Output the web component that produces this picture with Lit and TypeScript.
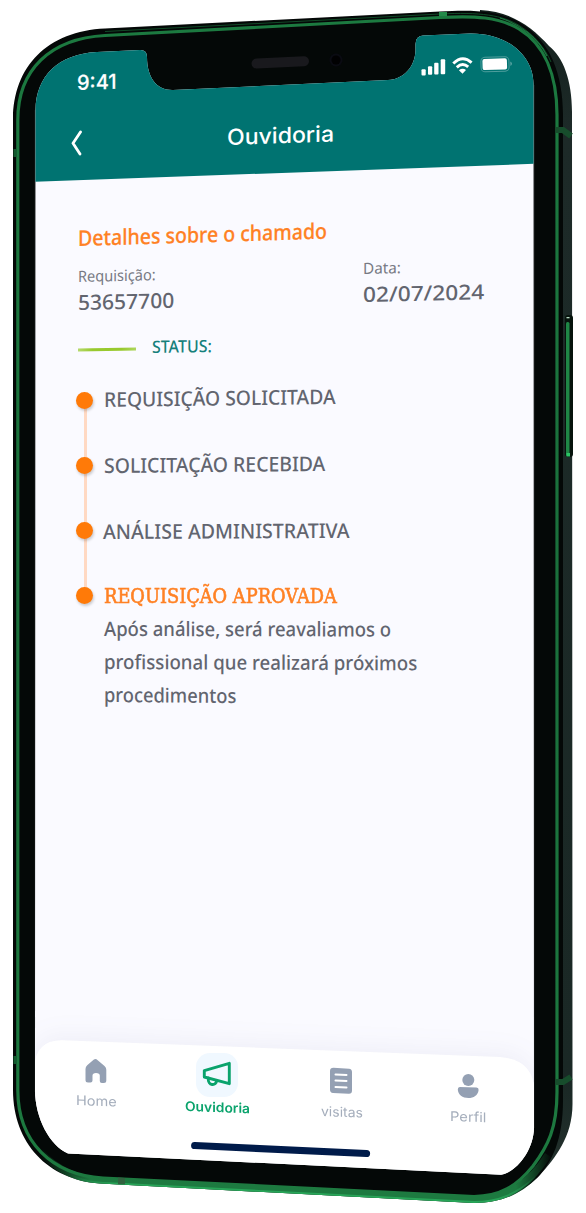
import { LitElement, html, css, svg } from "lit";
import { customElement, property, query } from "lit/decorators.js";

/** One line of text, stretched to a set width and slanted with the screen's perspective. */
@customElement("slant-text")
class SlantText extends LitElement {
  @property({ type: Number }) span = 100;
  @property({ type: Number }) slope = 0;
  @query(".t") private inner!: HTMLElement;

  static styles = css`
    :host { display: block; white-space: nowrap; }
    .t { display: inline-block; transform-origin: 0 50%; vertical-align: top; }
  `;

  firstUpdated() {
    const w = this.inner.offsetWidth;
    if (w) {
      this.style.width = `${this.span}px`;
      this.inner.style.transform = `skewY(${this.slope}deg) scaleX(${this.span / w})`;
    }
  }

  render() {
    return html`<span class="t"><slot></slot></span>`;
  }
}

const frame = svg`
  <defs>
    <linearGradient id="side" x1="0" y1="0" x2="0" y2="1">
      <stop offset="0" stop-color="#13201c"/><stop offset=".1" stop-color="#1d2a28"/>
      <stop offset=".9" stop-color="#1a2825"/><stop offset="1" stop-color="#26332f"/>
    </linearGradient>
    <linearGradient id="rim" x1="0" y1="0" x2="0" y2="1">
      <stop offset="0" stop-color="#1c7a40"/><stop offset=".5" stop-color="#1a6f3b"/><stop offset="1" stop-color="#1d7a40"/>
    </linearGradient>
    <linearGradient id="band" gradientUnits="userSpaceOnUse" x1="40" y1="0" x2="552" y2="0">
      <stop offset="0" stop-color="#1d7a40" stop-opacity="0"/><stop offset=".1" stop-color="#1d7a40"/>
      <stop offset=".93" stop-color="#1d7a40"/><stop offset="1" stop-color="#1d7a40" stop-opacity="0"/>
    </linearGradient>
    <linearGradient id="lip" gradientUnits="userSpaceOnUse" x1="70" y1="0" x2="540" y2="0">
      <stop offset="0" stop-color="#28a558" stop-opacity="0"/><stop offset=".1" stop-color="#28a558"/>
      <stop offset=".9" stop-color="#28a558"/><stop offset="1" stop-color="#28a558" stop-opacity="0"/>
    </linearGradient>
    <clipPath id="front"><path d="M13 120 C13 66 48 31 105 28.500 L440 11.500 C480 9 503 12 522 24 C550 41 563 74 563 115 L563 1100 C563 1140 552 1162 538 1177 C520 1195 500 1203 474 1203 L100 1183.500 C48 1180 13 1143 13 1090 Z"/></clipPath>
  </defs>
  <path fill="url(#side)" d="M480 10 C510 11 532 27 549 46 C563 57 572 80 572 112 L572.500 1104 C572.500 1137 555 1158 540 1175 C520 1195 500 1200 470 1200 Z"/>
  <g clip-path="url(#front)">
    <path fill="#040807" d="M13 8 H563 V1204 H13 Z"/>
    <path fill="none" stroke="url(#band)" stroke-width="7" d="M40 1152 C60 1173 82 1180 103 1181.500 L474 1200 C510 1200 532 1180 548 1155"/>
    <path fill="none" stroke="url(#lip)" stroke-width="4" d="M70 1176 C84 1182.500 94 1183.500 103 1184 L474 1203 C500 1203 518 1194 536 1178"/>
    <path fill="none" stroke="#155a2f" stroke-width="1" opacity=".8" d="M105 31.500 L440 14 C480 12 503 15 520 26 C534 35 545 48 551 62"/>
  </g>
  <path fill="none" stroke="url(#rim)" stroke-width="3.200" d="M17.800 1090 L17.800 120 C17.800 70 50 38.500 105 35.500 L440 17.500 C475 15.500 499 17 519 29 C545 45 557 76 557 115 L557 1092 C557 1128 548 1146 533 1166 C517 1186 500 1196.500 474 1196.500 L103 1178 C52 1175 17.800 1142 17.800 1090 Z"/>
  <path fill="none" stroke="#2aa75a" stroke-width="1.200" opacity=".7" d="M500 18 C520 24 538 38 547 56"/>
  <path fill="#12592e" d="M13.500 149 h3 v8 h-3z M13.500 1056 h3 v8 h-3z"/>
  <path fill="#238a49" d="M439 12 h8 v4 h-8z"/>
  <path fill="none" stroke="#174d2c" stroke-width="6" d="M555.500 130 L563 130 L571 136 M555.500 1082 L563 1082 L571 1077"/>
  <path fill="#31623f" d="M118 1177.500 l7 .4 v6.400 l-7 -.4z"/>
  <rect x="565" y="315" width="8" height="142" rx="3" fill="#06130c"/>
  <rect x="566" y="322" width="3.500" height="134" rx="1.500" fill="#1f8746"/>
  <rect x="566.500" y="317" width="3" height="1.300" fill="#b9dcc6"/>
  <rect x="566.500" y="453" width="3.500" height="3.500" fill="#2bc365"/>
  <path stroke="#19191d" stroke-width="10" stroke-linecap="round" d="M256.500 63.500 L304 61.200"/>
  <circle cx="336" cy="60" r="6.500" fill="#0a0b12"/><circle cx="336" cy="60" r="4.500" fill="#010102"/>
  <path fill="none" stroke="#5b5f60" stroke-width="1" opacity=".35" d="M35.200 110 L35.200 1092 M534 85 L534 1128"/>
`;

const icons = {
  home: html`<svg width="24" height="26" viewBox="0 0 24 26"><path fill="#94a0b3" d="M9.600 1.800 Q11.600 .2 13.400 1.900 L20.500 8 Q22.300 9.600 22.300 11.800 V22.500 Q22.300 25 19.800 25 H17.800 Q15.800 25 15.800 23 V17.500 Q15.800 15 12 15 Q8.500 15 8.500 17.500 V22.500 Q8.500 24.500 6.500 24.500 H4 Q1.500 24.500 1.500 22 V11 Q1.500 8.700 3.200 7.300 Z"/></svg>`,
  horn: html`<svg width="42" height="44" viewBox="0 0 42 44"><rect width="42" height="44" rx="14" fill="#f0f8ff"/>
    <g fill="none" stroke="#0aa36c" stroke-width="2.900" stroke-linejoin="round" stroke-linecap="round"><path d="M33.300 10.300 V30.700 L8.300 24 V17.600 Z"/><path d="M12.300 25 C11.500 33 20.500 33.500 20.600 27.400"/></g></svg>`,
  list: html`<svg width="24" height="28" viewBox="0 0 24 28"><path fill="#94a0b3" d="M4.500 .8 L20 1.700 Q23 2 23 5 V23.500 Q23 27 19.700 26.800 L4 26 Q1 25.700 1 22.700 V4 Q1 .8 4.500 .8Z"/><path stroke="#fff" stroke-width="2" stroke-linecap="round" d="M6.500 7.500 L17.500 8 M6.500 13.500 L17.500 14 M6.500 20 L17.500 20.500"/></svg>`,
  user: html`<svg width="24" height="26" viewBox="0 0 24 26"><circle cx="12.300" cy="7" r="6" fill="#94a0b3"/><path fill="#94a0b3" d="M3.800 14 L20.500 14.500 Q22.800 14.600 22.600 17 C22 22.500 17.500 25 12.500 25 C6.500 25 2 21.500 1.800 16.500 Q1.700 14 3.800 14Z"/></svg>`,
};

@customElement("app-root")
class AppRoot extends LitElement {
  static styles = css`
    :host { display: block; width: 586px; height: 1213px; background: #fff; overflow: hidden; font-family: "Noto Sans", sans-serif; }
    .phone { position: relative; width: 586px; height: 1213px; }
    .frame { position: absolute; inset: 0; }
    .screen {
      position: relative; display: flex; flex-direction: column; height: 1213px; background: #fafaff; color: #62656f;
      clip-path: path("M35.5 110 C36 76 58 54 97 52 L140 50 Q147 49.800 147 57 C147 78 157 90.500 173 90 L388 80 C404 79.500 415.300 66 415.500 50 L415.500 44 Q415.500 36 423 35.500 L470 33.500 C508 33 533.500 56 533.500 84 L534 1128 C533.500 1150 517 1172 501 1174.700 L68 1153.500 C50 1146 35 1118 35 1090 Z");
    }
    header { box-sizing: border-box; height: 182px; background: #007371; color: #fff; clip-path: polygon(0 0, 100% 0, 100% 162px, 0 183px); font-family: Inter, sans-serif; }
    .status { display: flex; justify-content: space-between; padding: 55px 74px 0 77px; height: 40px; }
    .time { margin-top: 16px; font-size: 20.500px; line-height: 24px; font-weight: 500; -webkit-text-stroke: .2px #fff; }
    .bar { display: flex; padding: 29px 0 0 70px; }
    .heading { margin: 0 0 0 144.500px; font-size: 22px; line-height: 26px; font-weight: 500; }
    main { flex: none; height: 857px; padding: 42px 0 0 78px; box-sizing: border-box; }
    h2 { margin: 0; font-size: 21.500px; line-height: 28px; font-weight: 500; color: #ff8124; -webkit-text-stroke: .2px #ff8124; }
    .facts { display: grid; grid-template-columns: 285px 1fr; margin-top: 16px; height: 48px; }
    .fact { display: grid; align-content: start; row-gap: 4px; }
    .fact.right { margin-top: -8px; }
    .label { font-size: 15.500px; line-height: 17px; color: #777983; }
    .value { font-size: 20.800px; line-height: 26px; font-weight: 500; }
    .state { display: flex; align-items: center; gap: 17px; margin-top: 19px; height: 24px; color: #15807b; font-size: 17px; line-height: 24px; font-weight: 500; }
    .state slant-text { margin-left: -1px; }
    .dash { width: 57.500px; height: 2.500px; background: linear-gradient(90deg, #b5d96b, #98c92e 25%, #98c92e 75%, #add65d); transform: translateY(2px) skewY(-1.200deg); }
    ol { list-style: none; margin: 29px 0 0; padding: 0 0 0 26px; }
    li { display: flow-root; position: relative; height: 65.300px; font-size: 20.300px; line-height: 24px; font-weight: 500; }
    li::before { content: ""; position: absolute; left: -28px; top: 3.500px; width: 17px; height: 17px; border-radius: 50%; background: #ff7a08; box-shadow: 1px 2px 3px #0003; z-index: 1; }
    li:not(:last-child)::after { content: ""; position: absolute; left: -20.500px; top: 12px; width: 3px; height: 65.300px; background: #ffd9c3; }
    li:nth-child(1) > slant-text { margin-top: -1px; }
    li:nth-child(3) > slant-text { margin-left: -1px; }
    .done { color: #ff8124; font-family: "DejaVu Serif", serif; font-size: 19.500px; line-height: 26px; font-weight: 400; -webkit-text-stroke: .6px #ff8124; }
    .note { line-height: 32.600px; font-size: 20px; margin-top: 3.500px; }
    nav { box-sizing: border-box; flex: none; height: 174px; padding-left: 36px; background: #fff; clip-path: path("M34 30 Q35 1 62 1.300 L500 18 Q530 20 534 46 V174 H34 Z"); }
    .navwrap { filter: drop-shadow(0 -4px 12px #5a5a8c12); }
    .tabs { display: grid; grid-template-columns: 120.400px 121.800px 126.600px 126.400px; height: 98px; }
    .tab { display: flex; flex-direction: column; align-items: center; font: 400 13.500px/18px Inter, sans-serif; color: #a5aebc; }
    .tab svg { display: block; }
    .tab.home { padding-top: 19px; }
    .tab.horn { padding-top: 14px; color: #0aa36c; font-weight: 600; }
    .tab.list { padding-top: 28px; }
    .tab.user { padding-top: 34px; }
    .home slant-text { margin-top: 7px; }
    .list slant-text { margin-top: 7px; }
    .user slant-text { margin-top: 8px; }
    .pill { display: block; margin-left: 155px; margin-top: 3px; }
  `;

  render() {
    return html`
      <div class="phone">
        <svg class="frame" width="586" height="1213" viewBox="0 0 586 1213">${frame}</svg>
        <div class="screen">
          <header>
            <div class="status">
              <slant-text class="time" span="40" slope="-1.8">9:41</slant-text>
              <svg width="92" height="22" viewBox="0 0 92 22" fill="#fff">
                <rect x="1.500" y="14.300" width="4.200" height="6.200" rx="1"/><rect x="8" y="11.300" width="4.200" height="8.500" rx="1"/>
                <rect x="14.200" y="7.800" width="4.300" height="11.700" rx="1"/><rect x="20.700" y="4.200" width="4.500" height="15" rx="1"/>
                <g fill="none" stroke="#fff" stroke-width="2.900"><path d="M33.300 8.600 Q42.300 -.5 51.600 7.600"/><path d="M36.800 12.400 Q42.500 6.900 48.200 11.900"/></g>
                <path d="M38.900 15.300 Q42.500 12.600 46 15 L42.500 18.700Z"/>
                <g transform="rotate(-1.800 74 9)"><rect x="61" y="2" width="28" height="14.500" rx="4" fill="none" stroke="#fff" stroke-opacity=".3"/><rect x="62.500" y="3.600" width="24.500" height="11.200" rx="2"/><path fill-opacity=".45" d="M90.500 7 Q93 9 90.500 11.500z"/></g>
              </svg>
            </div>
            <div class="bar">
              <svg width="12" height="40" viewBox="0 0 12 40"><path fill="none" stroke="#fff" stroke-width="2.800" stroke-linecap="round" stroke-linejoin="round" d="M10.500 8 L3 19.200 L10 30"/></svg>
              <slant-text class="heading" span="107" slope="-1.9">Ouvidoria</slant-text>
            </div>
          </header>
          <main>
            <h2><slant-text span="249" slope="-1.7">Detalhes sobre o chamado</slant-text></h2>
            <div class="facts">
              <div class="fact">
                <slant-text class="label" span="78" slope="-1.3">Requisição:</slant-text>
                <slant-text class="value" span="96" slope="-1.3">53657700</slant-text>
              </div>
              <div class="fact right">
                <slant-text class="label" span="37.500" slope="-1.3">Data:</slant-text>
                <slant-text class="value" span="121" slope="-1.3">02/07/2024</slant-text>
              </div>
            </div>
            <div class="state"><i class="dash"></i><slant-text span="60" slope="-.9">STATUS:</slant-text></div>
            <ol>
              <li><slant-text span="232" slope="-.75">REQUISIÇÃO SOLICITADA</slant-text></li>
              <li><slant-text span="221" slope="-.55">SOLICITAÇÃO RECEBIDA</slant-text></li>
              <li><slant-text span="247" slope="-.25">ANÁLISE ADMINISTRATIVA</slant-text></li>
              <li>
                <slant-text class="done" span="232.500" slope="0">REQUISIÇÃO APROVADA</slant-text>
                <div class="note">
                  <slant-text span="287" slope=".1">Após análise, será reavaliamos o</slant-text>
                  <slant-text span="313" slope=".25">profissional que realizará próximos</slant-text>
                  <slant-text span="132" slope=".45">procedimentos</slant-text>
                </div>
              </li>
            </ol>
          </main>
          <div class="navwrap">
            <nav>
              <div class="tabs">
                <div class="tab home">${icons.home}<slant-text span="41" slope="2">Home</slant-text></div>
                <div class="tab horn">${icons.horn}<slant-text span="65.500" slope="2">Ouvidoria</slant-text></div>
                <div class="tab list">${icons.list}<slant-text span="41.500" slope="2">visitas</slant-text></div>
                <div class="tab user">${icons.user}<slant-text span="36" slope="2">Perfil</slant-text></div>
              </div>
              <svg class="pill" width="180" height="20" viewBox="0 0 180 20"><path stroke="#001b4a" stroke-width="7.200" stroke-linecap="round" d="M3.700 5.500 L175.500 13.500"/></svg>
            </nav>
          </div>
        </div>
      </div>
    `;
  }
}
